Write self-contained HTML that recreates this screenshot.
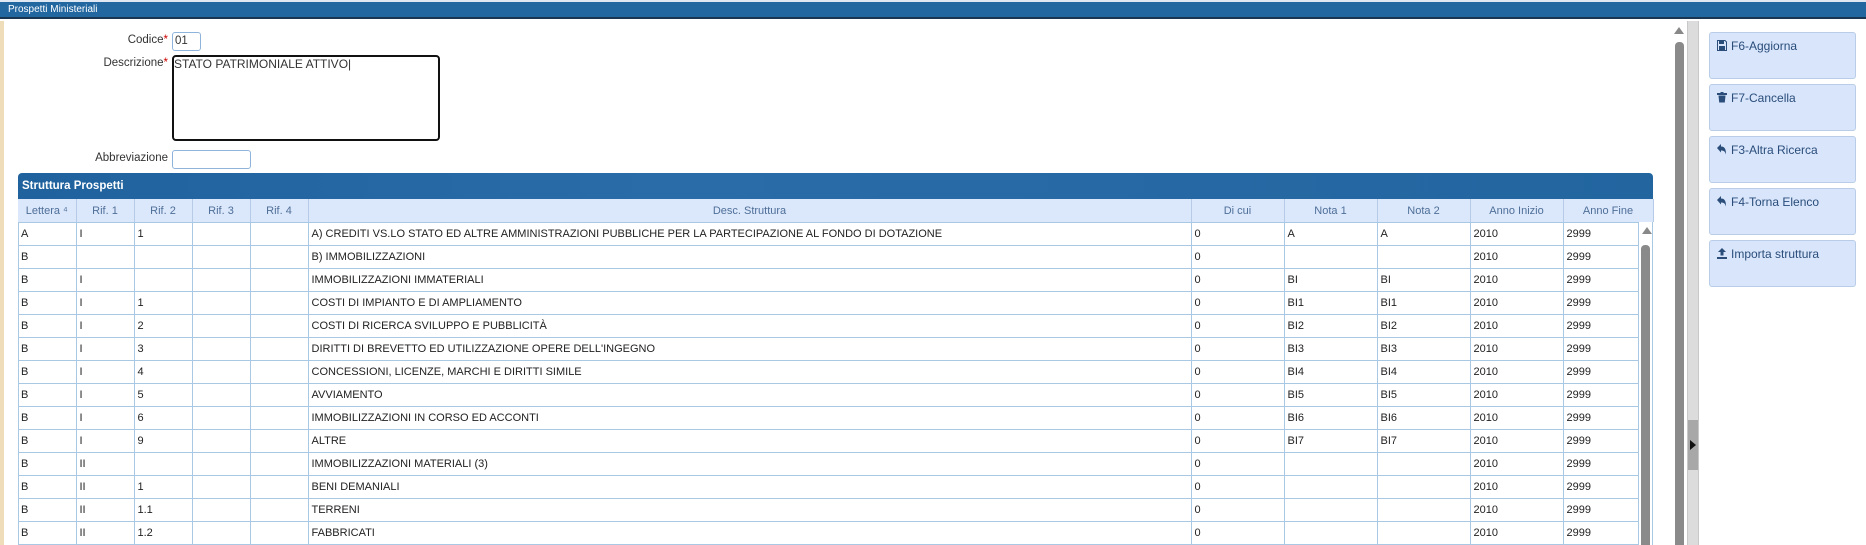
<!DOCTYPE html>
<html><head><meta charset="utf-8"><style>
*{box-sizing:border-box;margin:0;padding:0}
body{width:1866px;height:545px;overflow:hidden;background:#fff;font-family:"Liberation Sans",sans-serif;position:relative;color:#333}
.abs{position:absolute}
.bar{left:0;top:2px;width:1866px;height:17px;background:#2367a1;border-bottom:2px solid #1a3550;color:#fff;font-size:10px;line-height:15px;padding-left:8px}
.lbl{font-size:11.5px;color:#333;text-align:right;width:160px;left:8px}
.req{color:#c00}
.inp{border:1px solid #8fb4dc;border-radius:3px;background:#fff;font-size:11.5px;padding-left:2px;line-height:16px}
table{border-collapse:collapse;table-layout:fixed;font-size:11px}
td{height:23px;border:1px solid #a9c8e4;padding-left:3px;white-space:nowrap;overflow:hidden;color:#222}
td:first-child{border-left:none}
th{height:23px;font-weight:normal;color:#4e6f98;border-right:1px solid #b7cbe6;background:#dbe7fb;font-size:11px}
.btn{left:1709px;width:147px;height:47px;background:#d8e5fb;border:1px solid #b9cde9;border-radius:3px;font-size:12px;color:#2a4d7a;padding:6px 0 0 7px}
.btn svg{vertical-align:-1px;margin-right:4px}
</style></head><body>
<div class="abs" style="left:0;top:0;width:1866px;height:3px;background:#dfe8f2"></div>
<div class="abs bar">Prospetti Ministeriali</div>
<div class="abs" style="left:0;top:21px;width:4px;height:524px;background:#efdcb9"></div>

<div class="abs lbl" style="top:34px">Codice<span class="req">*</span></div>
<div class="abs inp" style="left:172px;top:32px;width:29px;height:19px">01</div>
<div class="abs lbl" style="top:57px">Descrizione<span class="req">*</span></div>
<div class="abs" style="left:172px;top:55px;width:268px;height:86px;border:2px solid #111;border-radius:4px;font-size:12px;line-height:14px;padding-left:0">STATO PATRIMONIALE ATTIVO|</div>
<div class="abs lbl" style="top:152px">Abbreviazione</div>
<div class="abs inp" style="left:172px;top:150px;width:79px;height:19px"></div>

<div class="abs" style="left:18px;top:173px;width:1635px;height:27px;background:linear-gradient(90deg,#20629d,#2a6ca8 40%,#22659f);border-radius:4px 4px 0 0;color:#fff;font-weight:bold;font-size:11.5px;line-height:26px;padding-left:4px">Struttura Prospetti</div>
<div class="abs" style="left:18px;top:199px;width:1635px;height:346px;border-left:1px solid #a9c8e4;border-right:1px solid #a9c8e4"></div>
<table class="abs" style="left:18px;top:199px;width:1635px">
<colgroup><col style="width:58px"><col style="width:58px"><col style="width:58px"><col style="width:58px"><col style="width:58px"><col style="width:883px"><col style="width:93px"><col style="width:93px"><col style="width:93px"><col style="width:93px"><col style="width:90px"></colgroup>
<tr><th>Lettera ⁴</th><th>Rif. 1</th><th>Rif. 2</th><th>Rif. 3</th><th>Rif. 4</th><th>Desc. Struttura</th><th>Di cui</th><th>Nota 1</th><th>Nota 2</th><th>Anno Inizio</th><th>Anno Fine</th></tr>
</table>
<table class="abs" style="left:18px;top:222px;width:1620px">
<colgroup><col style="width:58px"><col style="width:58px"><col style="width:58px"><col style="width:58px"><col style="width:58px"><col style="width:883px"><col style="width:93px"><col style="width:93px"><col style="width:93px"><col style="width:93px"><col style="width:75px"></colgroup>
<tr><td>A</td><td>I</td><td>1</td><td></td><td></td><td>A) CREDITI VS.LO STATO ED ALTRE AMMINISTRAZIONI PUBBLICHE PER LA PARTECIPAZIONE AL FONDO DI DOTAZIONE</td><td>0</td><td>A</td><td>A</td><td>2010</td><td>2999</td></tr>
<tr><td>B</td><td></td><td></td><td></td><td></td><td>B) IMMOBILIZZAZIONI</td><td>0</td><td></td><td></td><td>2010</td><td>2999</td></tr>
<tr><td>B</td><td>I</td><td></td><td></td><td></td><td>IMMOBILIZZAZIONI IMMATERIALI</td><td>0</td><td>BI</td><td>BI</td><td>2010</td><td>2999</td></tr>
<tr><td>B</td><td>I</td><td>1</td><td></td><td></td><td>COSTI DI IMPIANTO E DI AMPLIAMENTO</td><td>0</td><td>BI1</td><td>BI1</td><td>2010</td><td>2999</td></tr>
<tr><td>B</td><td>I</td><td>2</td><td></td><td></td><td>COSTI DI RICERCA SVILUPPO E PUBBLICITÀ</td><td>0</td><td>BI2</td><td>BI2</td><td>2010</td><td>2999</td></tr>
<tr><td>B</td><td>I</td><td>3</td><td></td><td></td><td>DIRITTI DI BREVETTO ED UTILIZZAZIONE OPERE DELL'INGEGNO</td><td>0</td><td>BI3</td><td>BI3</td><td>2010</td><td>2999</td></tr>
<tr><td>B</td><td>I</td><td>4</td><td></td><td></td><td>CONCESSIONI, LICENZE, MARCHI E DIRITTI SIMILE</td><td>0</td><td>BI4</td><td>BI4</td><td>2010</td><td>2999</td></tr>
<tr><td>B</td><td>I</td><td>5</td><td></td><td></td><td>AVVIAMENTO</td><td>0</td><td>BI5</td><td>BI5</td><td>2010</td><td>2999</td></tr>
<tr><td>B</td><td>I</td><td>6</td><td></td><td></td><td>IMMOBILIZZAZIONI IN CORSO ED ACCONTI</td><td>0</td><td>BI6</td><td>BI6</td><td>2010</td><td>2999</td></tr>
<tr><td>B</td><td>I</td><td>9</td><td></td><td></td><td>ALTRE</td><td>0</td><td>BI7</td><td>BI7</td><td>2010</td><td>2999</td></tr>
<tr><td>B</td><td>II</td><td></td><td></td><td></td><td>IMMOBILIZZAZIONI MATERIALI (3)</td><td>0</td><td></td><td></td><td>2010</td><td>2999</td></tr>
<tr><td>B</td><td>II</td><td>1</td><td></td><td></td><td>BENI DEMANIALI</td><td>0</td><td></td><td></td><td>2010</td><td>2999</td></tr>
<tr><td>B</td><td>II</td><td>1.1</td><td></td><td></td><td>TERRENI</td><td>0</td><td></td><td></td><td>2010</td><td>2999</td></tr>
<tr><td>B</td><td>II</td><td>1.2</td><td></td><td></td><td>FABBRICATI</td><td>0</td><td></td><td></td><td>2010</td><td>2999</td></tr>
</table>
<div class="abs" style="left:1642px;top:227px;width:0;height:0;border-left:5px solid transparent;border-right:5px solid transparent;border-bottom:7px solid #888"></div>
<div class="abs" style="left:1641px;top:245px;width:9px;height:300px;background:#8a8a8a;border-radius:4px 4px 0 0"></div>
<div class="abs" style="left:1674px;top:27px;width:0;height:0;border-left:5px solid transparent;border-right:5px solid transparent;border-bottom:7px solid #888"></div>
<div class="abs" style="left:1675px;top:42px;width:9px;height:503px;background:#8a8a8a;border-radius:4px 4px 0 0"></div>
<div class="abs" style="left:1687px;top:21px;width:12px;height:524px;background:#dcdcdc;border-left:1px solid #c8c8c8;border-right:1px solid #c8c8c8"></div>
<div class="abs" style="left:1688px;top:420px;width:10px;height:50px;background:#a8a8a8"></div>
<div class="abs" style="left:1690px;top:440px;width:0;height:0;border-top:5px solid transparent;border-bottom:5px solid transparent;border-left:6px solid #111"></div>

<div class="abs btn" style="top:32px"><svg width="10" height="11" viewBox="0 0 10 11"><path d="M0.5 0.5h7.5l1.5 1.5v8.5h-9z" fill="none" stroke="#2a4d7a"/><rect x="2" y="1" width="5" height="3" fill="#2a4d7a"/><rect x="2" y="6" width="6" height="4" fill="#2a4d7a"/></svg>F6-Aggiorna</div>
<div class="abs btn" style="top:84px"><svg width="10" height="11" viewBox="0 0 10 11"><rect x="0" y="1" width="10" height="2" fill="#2a4d7a"/><rect x="3.5" y="0" width="3" height="1.5" fill="#2a4d7a"/><path d="M1.5 3.5h7l-0.7 7h-5.6z" fill="#2a4d7a"/></svg>F7-Cancella</div>
<div class="abs btn" style="top:136px"><svg width="10" height="11" viewBox="0 0 10 11"><path d="M0 4l4-4v2.5c4 0 5 3 5 8c-1-3-2-4-5-4v2z" fill="#2a4d7a"/></svg>F3-Altra Ricerca</div>
<div class="abs btn" style="top:188px"><svg width="10" height="11" viewBox="0 0 10 11"><path d="M0 4l4-4v2.5c4 0 5 3 5 8c-1-3-2-4-5-4v2z" fill="#2a4d7a"/></svg>F4-Torna Elenco</div>
<div class="abs btn" style="top:240px"><svg width="10" height="11" viewBox="0 0 10 11"><path d="M5 0l4 4h-2.5v3.5h-3v-3.5h-2.5z" fill="#2a4d7a"/><rect x="0" y="9" width="10" height="2" fill="#2a4d7a"/></svg>Importa struttura</div>
</body></html>
